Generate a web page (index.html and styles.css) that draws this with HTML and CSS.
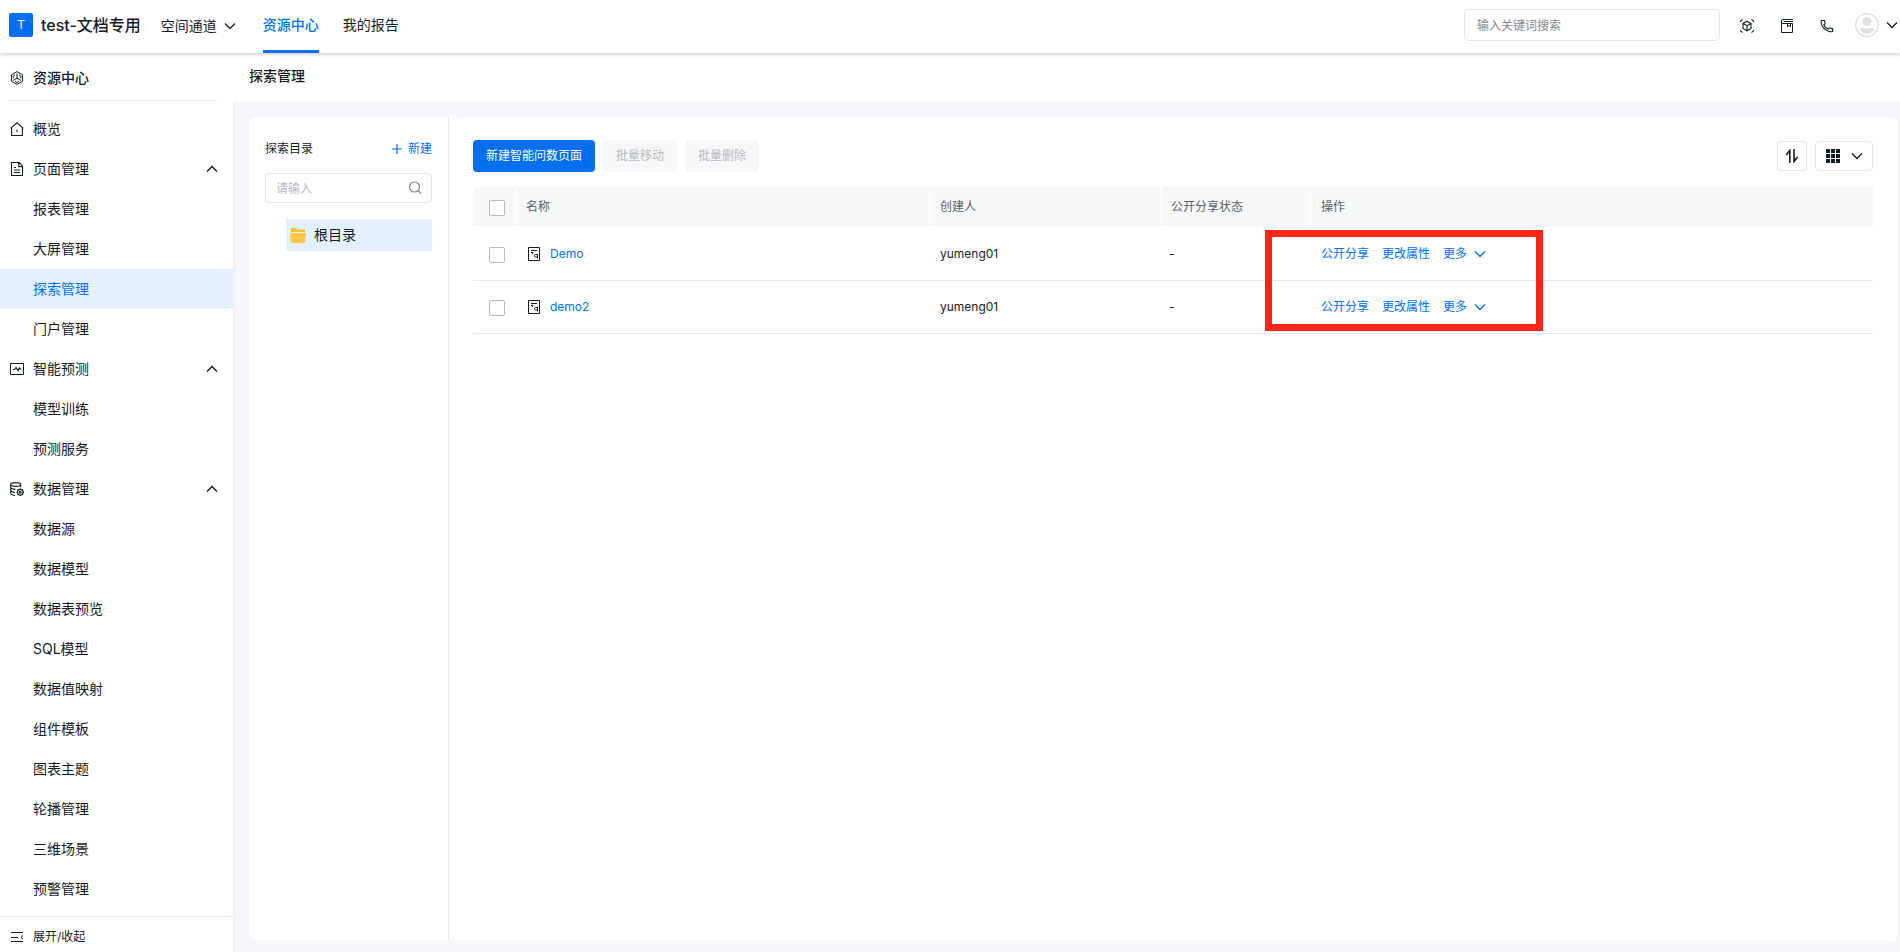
FILE: index.html
```html
<!DOCTYPE html>
<html lang="zh-CN">
<head>
<meta charset="utf-8">
<title>探索管理</title>
<link rel="stylesheet" href="styles.css">
</head>
<body>
<svg class="sprite" aria-hidden="true">
  <symbol id="down" viewBox="0 0 12 12"><path d="M1 3.5 6 8.5l5-5" fill="none" stroke="currentColor" stroke-width="1.3"/></symbol>
  <symbol id="up" viewBox="0 0 12 12"><path d="M1 8.5l5-5 5 5" fill="none" stroke="currentColor" stroke-width="1.3"/></symbol>
  <symbol id="page" viewBox="0 0 14 14"><path d="M1.5.5h11v13h-11z" fill="none" stroke="currentColor"/><path d="M4 3h6v1H4zM4 5h2v1H4zM5 6h1v1H5z" fill="currentColor"/><path d="M10.500 7v4.500M10.500 7.500h-2q-1 0-1 1.200t1 1.300h2" fill="none" stroke="currentColor"/></symbol>
</svg>
<header class="topbar">
  <span class="logo">T</span>
  <strong class="space-name">test-文档专用</strong>
  <button class="channel" type="button">空间通道<svg class="i12"><use href="#down"/></svg></button>
  <nav class="tabs">
    <a class="tab active" href="#">资源中心</a>
    <a class="tab" href="#">我的报告</a>
  </nav>
  <input class="global-search" type="text" placeholder="输入关键词搜索" aria-label="输入关键词搜索">
  <div class="tools">
    <button class="tool" type="button" aria-label="三维"><svg class="i16" viewBox="0 0 16 16" fill="none" stroke="currentColor" stroke-width="1.1"><path d="M8 3.2l4 2.2v5L8 12.8l-4-2.4v-5zM4 5.4l4 2.3 4-2.3M8 7.7v5"/><path d="M1.500 4V3.200L3.500 1.500M14.500 4V3.200L12.500 1.500M1.500 12v.8l2 1.700M14.500 12v.8l-2 1.700"/></svg></button>
    <button class="tool" type="button" aria-label="文档"><svg class="i16" viewBox="0 0 16 16" fill="none" stroke="currentColor"><path d="M14 1.500H4Q2.500 1.500 2.500 3v11.500h11v-9H4Q2.500 5.500 2.500 4M4.500 3.500H14M8.500 5.500v3l1.500-1 1.500 1v-3"/></svg></button>
    <button class="tool" type="button" aria-label="电话"><svg class="i16" viewBox="0 0 16 16" fill="none" stroke="currentColor" stroke-width="1.1"><path d="M2.500 2.500h3l.6 3.300-1.300 1.200q1.300 2.900 4.300 4.100l1.400-1.300 3.200.8v2.800q-1.700.8-4.200-.1Q2.400 10.300 2.200 4.200q0-1.100.3-1.700z"/></svg></button>
    <button class="account" type="button" aria-label="账户"><svg class="avatar" viewBox="0 0 24 24"><circle cx="12" cy="12" r="11.300" fill="#fff" stroke="#dfe1e6" stroke-width="1.400"/><circle cx="12" cy="8.500" r="4.500" fill="#dfe1e6"/><path d="M4.500 16q1.500-1.600 3.500-1.600 4 2 8 0 2 0 3.500 1.600-2.300 4.500-7.500 4.500T4.500 16z" fill="#dfe1e6"/></svg><svg class="i12"><use href="#down"/></svg></button>
  </div>
</header>
<div class="body">
  <aside class="sidebar">
    <h2 class="side-title"><svg class="i14" viewBox="0 0 14 14" fill="none" stroke="currentColor" stroke-width="1"><path d="M7 .6L1.400 3.800v6.400L7 13.400l5.600-3.200V3.800z"/><path d="M7 2.500v4.700L3 9.500M7 7.200l4 2.300M5 3.800L3.200 5v2.300M9 3.800l1.800 1.200v2.300M5 10.300l2 1.200 2-1.200"/></svg>资源中心</h2>
    <nav class="menu">
      <a class="item top" href="#"><svg class="i14" viewBox="0 0 14 14" fill="none" stroke="currentColor" stroke-width="1.1"><path d="M.6 6.400L7 .8l6.400 5.600M1.600 5.600v7.900h10.800V5.600M7 7.500v2.500"/></svg>概览</a>
      <button class="item top" type="button"><svg class="i14" viewBox="0 0 14 14" fill="none" stroke="currentColor" stroke-width="1.100"><path d="M1.500.5h7.700l3.300 3.600v9.400h-11zM8.700.8v3.800h3.800M4 5.500h2M4 8h6M4 10.500h6"/></svg><span class="grow">页面管理</span><svg class="i12"><use href="#up"/></svg></button>
      <a class="item" href="#">报表管理</a>
      <a class="item" href="#">大屏管理</a>
      <a class="item current" href="#">探索管理</a>
      <a class="item" href="#">门户管理</a>
      <button class="item top" type="button"><svg class="i14" viewBox="0 0 14 14" fill="none" stroke="currentColor"><path d="M.5 1.500h13v11H.5z"/><path d="M3 7.500h1.500L6 5.500l2 3 1.400-2.500 1 1h1" stroke-width="1.200"/></svg><span class="grow">智能预测</span><svg class="i12"><use href="#up"/></svg></button>
      <a class="item" href="#">模型训练</a>
      <a class="item" href="#">预测服务</a>
      <button class="item top" type="button"><svg class="i14" viewBox="0 0 14 14" fill="none" stroke="currentColor" stroke-width="1.100"><ellipse cx="5.700" cy="2.500" rx="5" ry="1.900"/><path d="M.7 2.500v9q0 1.500 4.300 2M10.700 2.500v2.800M.7 5.500q.5 1.700 4.800 1.900M.7 8.500q.5 1.500 4.300 1.800"/><circle cx="10.300" cy="10.300" r="2.900"/><circle cx="10.300" cy="10.300" r="1"/><path d="M10.300 6.500v1M10.300 13v1M6.600 10.300h1M13 10.300h1M7.700 7.700l.7.700M12.200 12.200l.7.700M7.700 12.900l.7-.7M12.200 8.400l.7-.7"/></svg><span class="grow">数据管理</span><svg class="i12"><use href="#up"/></svg></button>
      <a class="item" href="#">数据源</a>
      <a class="item" href="#">数据模型</a>
      <a class="item" href="#">数据表预览</a>
      <a class="item" href="#">SQL模型</a>
      <a class="item" href="#">数据值映射</a>
      <a class="item" href="#">组件模板</a>
      <a class="item" href="#">图表主题</a>
      <a class="item" href="#">轮播管理</a>
      <a class="item" href="#">三维场景</a>
      <a class="item" href="#">预警管理</a>
    </nav>
    <button class="collapse" type="button"><svg class="i14" viewBox="0 0 14 14" fill="none" stroke="currentColor"><path d="M1 2.500h12M1 7.500h7M1 11.500h12M13 5.500l-2 1.800 2 1.700"/></svg>展开/收起</button>
  </aside>
  <main class="main">
    <h1 class="page-title">探索管理</h1>
    <div class="card">
      <section class="catalog">
        <div class="catalog-head"><span>探索目录</span><button class="add" type="button"><svg class="i12" viewBox="0 0 12 12"><path d="M6 1v10M1 6h10" stroke="currentColor" stroke-width="1.200"/></svg>新建</button></div>
        <label class="filter"><input type="text" placeholder="请输入" aria-label="请输入"><svg class="i14" viewBox="0 0 14 14" fill="none" stroke="currentColor" stroke-width="1.200"><circle cx="6.500" cy="6" r="5"/><path d="M10 9.500l3 3"/></svg></label>
        <a class="node" href="#"><svg class="i16" viewBox="0 0 16 16"><path d="M1 5V1.500Q1 .8 1.800.8h4l1.600 1.700H15V5z" fill="#fbc02d"/><path d="M0 6h16l-1 9q-.1.900-1 .9H2q-.9 0-1-.9z" fill="#ffc64a"/><path d="M.6 5.500h15" stroke="#fff0c8" stroke-width=".8"/></svg>根目录</a>
      </section>
      <section class="content">
        <div class="actions">
          <button class="btn primary" type="button">新建智能问数页面</button>
          <button class="btn" type="button" disabled>批量移动</button>
          <button class="btn" type="button" disabled>批量删除</button>
          <button class="view sort" type="button" aria-label="排序"><svg class="i14" viewBox="0 0 14 14" fill="none" stroke="currentColor" stroke-width="1.600"><path d="M1.200 6l3.600-4.500V14M9 0v12.500L12.600 8"/></svg></button>
          <button class="view" type="button" aria-label="视图"><svg class="i14" viewBox="0 0 14 14" fill="currentColor"><path d="M0 0h4v4H0zM5 0h4v4H5zM10 0h4v4h-4zM0 5h4v4H0zM5 5h4v4H5zM10 5h4v4h-4zM0 10h4v4H0zM5 10h4v4H5zM10 10h4v4h-4z"/></svg><svg class="i12"><use href="#down"/></svg></button>
        </div>
        <div class="table-wrap">
          <table class="table">
            <colgroup><col class="c-check"><col class="c-name"><col class="c-user"><col class="c-state"><col></colgroup>
            <thead><tr><th><input type="checkbox" aria-label="全选"></th><th>名称</th><th>创建人</th><th>公开分享状态</th><th>操作</th></tr></thead>
            <tbody>
              <tr><td><input type="checkbox" aria-label="选择 Demo"></td><td><a class="name" href="#"><svg class="i14"><use href="#page"/></svg>Demo</a></td><td>yumeng01</td><td class="state">-</td><td><div class="ops"><a href="#">公开分享</a><a href="#">更改属性</a><button type="button">更多<svg class="i12"><use href="#down"/></svg></button></div></td></tr>
              <tr><td><input type="checkbox" aria-label="选择 demo2"></td><td><a class="name" href="#"><svg class="i14"><use href="#page"/></svg>demo2</a></td><td>yumeng01</td><td class="state">-</td><td><div class="ops"><a href="#">公开分享</a><a href="#">更改属性</a><button type="button">更多<svg class="i12"><use href="#down"/></svg></button></div></td></tr>
            </tbody>
          </table>
          <div class="highlight"></div>
        </div>
      </section>
    </div>
  </main>
</div>
</body>
</html>
```
FILE: styles.css
```css
* { box-sizing: border-box; }
body {
  margin: 0;
  height: 100vh;
  display: flex;
  flex-direction: column;
  font: 14px/20px Inter, "Noto Sans CJK SC", sans-serif;
  color: #151b26;
  background: #f6f7fa;
}
a { color: inherit; text-decoration: none; }
button { font: inherit; color: inherit; background: none; border: 0; padding: 0; }
input { font: inherit; color: inherit; }
h1, h2 { margin: 0; font-size: 14px; font-weight: 500; }
svg { flex: none; display: block; }
.sprite { position: absolute; width: 0; height: 0; }
.i12 { width: 12px; height: 12px; }
.i14 { width: 14px; height: 14px; }
.i16 { width: 16px; height: 16px; }

.topbar {
  position: relative;
  z-index: 1;
  flex: none;
  display: flex;
  align-items: center;
  height: 53px;
  padding: 0 2px 3px 9px;
  background: #fff;
  box-shadow: 0 1px 4px rgba(0, 0, 0, .25);
}
.logo { width: 24px; height: 24px; border-radius: 2px; background: #0070f0; color: #fff; font-size: 12px; line-height: 24px; text-align: center; }
.space-name { margin-left: 8px; font-size: 16px; font-weight: 500; }
.channel { display: flex; align-items: center; gap: 7px; margin-left: 20px; padding-top: 2px; }
.tabs { display: flex; gap: 24px; margin-left: 27px; align-self: stretch; }
.tab { height: 53px; line-height: 50px; border-bottom: 3px solid transparent; }
.tab.active { color: #0070f0; border-color: #0070f0; font-weight: 500; }
.global-search { width: 256px; height: 32px; margin-left: auto; padding: 0 12px; border: 1px solid #e4e6eb; border-radius: 4px; font-size: 12px; }
.global-search::placeholder { color: #84868c; }
.tools { display: flex; align-items: center; gap: 24px; margin-left: 19px; }
.tool { padding-top: 2px; }
.account { display: flex; align-items: center; gap: 7px; margin-left: -4px; }
.avatar { width: 24px; height: 24px; }

.body { flex: 1; min-height: 0; display: flex; }
.sidebar { width: 233px; flex: none; display: flex; flex-direction: column; background: #fff; box-shadow: 0 0 6px rgba(0, 0, 0, .06); }
.side-title { display: flex; align-items: center; gap: 9px; height: 48px; margin: 0 16px 8px 9px; padding: 2px 0 0 1px; border-bottom: 1px solid #e8e9eb; }
.menu { flex: 1; min-height: 0; overflow: hidden; }
.item { display: flex; align-items: center; gap: 9px; width: 100%; height: 40px; padding: 0 15px 0 33px; text-align: left; }
.item.top { padding-left: 10px; }
.item.current { background: #e3f0ff; color: #0070f0; }
.grow { flex: 1; }
.collapse { display: flex; align-items: center; gap: 9px; height: 36px; padding: 4px 10px 0; border-top: 1px solid #e4e4e6; font-size: 12px; }
.main { flex: 1; min-width: 0; display: flex; flex-direction: column; }
.page-title { height: 48px; padding: 0 16px; line-height: 46px; background: #fff; }
.card { flex: 1; display: flex; margin: 16px 3px 12px 16px; border-radius: 5px; background: #fff; }

.catalog { width: 200px; flex: none; padding: 22px 16px; border-right: 1px solid #e8e9eb; font-size: 12px; }
.catalog-head { display: flex; align-items: center; justify-content: space-between; }
.add { display: flex; align-items: center; gap: 5px; color: #0070f0; }
.filter { display: flex; align-items: center; height: 30px; margin: 14px 0 16px; padding: 0 9px 0 10px; border: 1px solid #e4e6eb; border-radius: 4px; color: #84868c; }
.filter input { flex: 1; min-width: 0; border: 0; padding: 1px 0 0; outline: 0; background: none; }
.filter input::placeholder { color: #b8babf; }
.node { display: flex; align-items: center; gap: 8px; height: 32px; margin-left: 21px; padding-left: 4px; background: #e3f0ff; font-size: 14px; }

.content { flex: 1; min-width: 0; padding: 23px 24px; font-size: 12px; }
.actions { display: flex; align-items: center; gap: 8px; margin-bottom: 15px; }
.btn { height: 32px; padding: 0 13px; border-radius: 4px; background: #f7f7f9; color: #b8babf; }
.btn.primary { background: #0070f0; color: #fff; }
.view { display: flex; align-items: center; gap: 11px; height: 30px; padding: 0 9px 0 10px; border: 1px solid #e4e6eb; border-radius: 4px; }
.sort { margin-left: auto; padding: 0 7px; }
.table-wrap { position: relative; }
.table { width: 100%; border-collapse: separate; border-spacing: 0; table-layout: fixed; }
.c-check { width: 43px; }
.c-name { width: 414px; }
.c-user { width: 231px; }
.c-state { width: 150px; }
th { height: 41px; padding: 0 10px; background: #f7f8fa; color: #5c5f66; font-weight: 400; text-align: left; border-right: 1px solid #fff; border-bottom: 1px solid #fff; }
th:first-child { border-radius: 4px 0 0 0; }
th:last-child { border-right: 0; }
td { height: 53px; padding: 0 10px; border-bottom: 1px solid #e8e9eb; }
th:first-child, td:first-child { padding: 2px 0 0 16px; }
td.state { padding-left: 8px; }
.table input { appearance: none; display: block; width: 16px; height: 16px; margin: 0; border: 1px solid #b8babf; border-radius: 2px; background: #fff; }
.name { display: flex; align-items: center; gap: 9px; padding-left: 1px; color: #0070f0; }
.name svg { color: #151b26; }
.ops { display: flex; align-items: center; gap: 13px; color: #0070f0; }
.ops button { display: flex; align-items: center; gap: 7px; }
.highlight { position: absolute; left: 792px; top: 43px; width: 278px; height: 101px; border: 7px solid #ff2517; pointer-events: none; }
```
